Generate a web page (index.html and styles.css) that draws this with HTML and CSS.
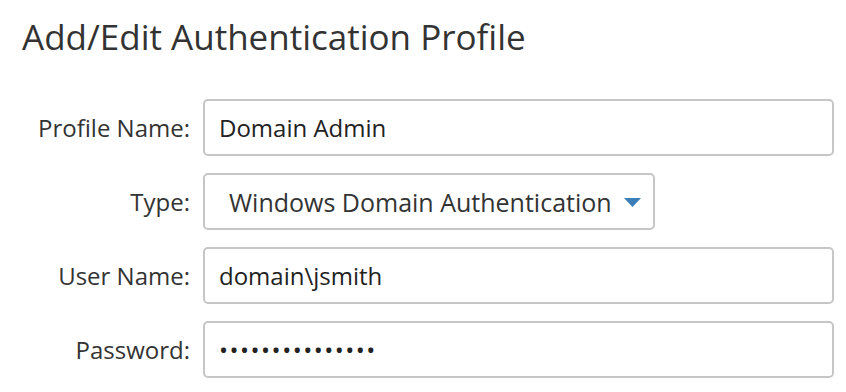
FILE: index.html
```html
<!DOCTYPE html>
<html lang="en">
<head>
  <meta charset="UTF-8">
  <meta name="viewport" content="width=device-width, initial-scale=1.0">
  <title>Add/Edit Authentication Profile</title>
  <link rel="stylesheet" href="styles.css">
</head>
<body>

<h1>Add/Edit Authentication Profile</h1>

<form class="profile-form" id="profile-form">
  <label for="profile-name">Profile Name:</label>
  <input type="text" id="profile-name" value="Domain Admin">

  <label for="auth-type">Type:</label>
  <div class="select-wrap">
    <select id="auth-type">
      <option>Windows Domain Authentication</option>
      <option>SSH Authentication</option>
    </select>
    <!-- 드롭다운 화살표 -->
    <svg class="caret" width="17" height="9" viewBox="0 0 17 9">
      <path d="M0 0 H17 L8.5 9 Z" fill="#3b7fb8"/>
    </svg>
  </div>

  <label for="user-name">User Name:</label>
  <input type="text" id="user-name" value="domain\jsmith">

  <label for="password">Password:</label>
  <input type="password" id="password" value="secretpass12345">
</form>

</body>
</html>
```

FILE: styles.css
```css
body {
  font-family: "Open Sans", Arial, sans-serif;
  background-color: #fff;
  margin: 0;
  color: #333;
}

h1 {
  font-size: 35px;
  font-weight: 400;
  margin: 0;
  padding: 13px 0 0 22px;
  line-height: 48px;
  color: #333;
}

.profile-form {
  display: grid;
  grid-template-columns: 190px 631px;
  column-gap: 13px;
  row-gap: 17px;
  margin-top: 38px;
  align-items: center;
}

.profile-form label {
  text-align: right;
  font-size: 24px;
  color: #333;
  white-space: nowrap;
}

.profile-form input,
.profile-form select {
  box-sizing: border-box;
  height: 57px;
  border: 2px solid #c6c6c6;
  border-radius: 5px;
  font-family: inherit;
  font-size: 24px;
  color: #222;
  background: #fff;
  outline: none;
}

.profile-form input {
  width: 100%;
  padding: 0 14px;
}

.profile-form input[type="password"] {
  letter-spacing: 1.5px;
}

.select-wrap {
  position: relative;
  width: 452px;
}

.select-wrap select {
  appearance: none;
  -webkit-appearance: none;
  width: 100%;
  padding: 0 40px 0 24px;
  font-size: 25px;
  color: #333;
}

.caret {
  position: absolute;
  right: 14px;
  top: 25px;
  pointer-events: none;
}
```
